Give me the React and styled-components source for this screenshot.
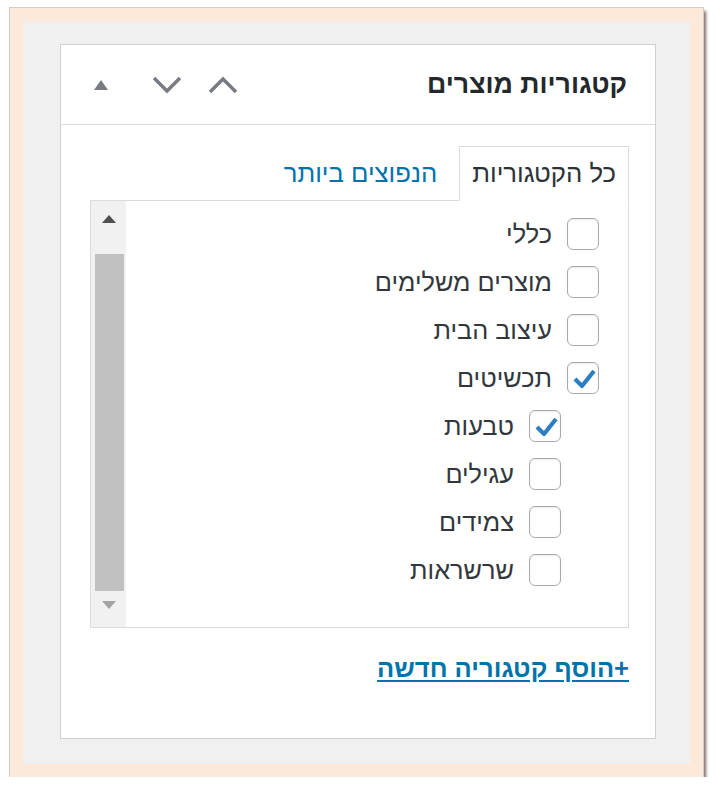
import React from "react";
import styled, { createGlobalStyle } from "styled-components";

const GlobalStyle = createGlobalStyle`
  html, body {
    margin: 0;
    padding: 0;
    background: #ffffff;
  }
  body {
    font-family: "Liberation Sans", Arial, "DejaVu Sans", sans-serif;
  }
`;

const Frame = styled.div`
  box-sizing: border-box;
  margin: 8px 0 0 10px;
  width: 693px;
  height: 769px;
  border: 13px solid #fde9da;
  background: #f0f0f0;
  box-shadow: 0 0 0 1px #d8cbc1, 3px 3px 3px rgba(80, 60, 50, 0.75);
  padding: 23px 34px 25px 37px;
  display: flex;
  flex-direction: column;
`;

const Panel = styled.div`
  flex: 1;
  direction: rtl;
  background: #ffffff;
  border: 1px solid #cdd0d4;
  display: flex;
  flex-direction: column;
`;

const Header = styled.div`
  height: 79px;
  display: flex;
  align-items: center;
  justify-content: space-between;
  border-bottom: 1px solid #dcdde0;
  padding: 0 28px 0 12px;
`;

const Title = styled.h2`
  margin: 0;
  font-size: 26.7px;
  font-weight: 700;
  color: #23282d;
`;

const Handles = styled.div`
  display: flex;
  align-items: center;
  gap: 10px;
`;

const HandlePair = styled.div`
  display: flex;
`;

const HandleButton = styled.span`
  width: 56px;
  height: 40px;
  display: flex;
  align-items: center;
  justify-content: center;
`;

const Content = styled.div`
  padding: 21px 26px 0 29px;
  display: flex;
  flex-direction: column;
`;

const Tabs = styled.div`
  display: flex;
  align-items: stretch;
  gap: 9px;
  margin-bottom: -1px;
  position: relative;
  z-index: 1;
`;

const Tab = styled.span`
  height: 55px;
  box-sizing: border-box;
  display: flex;
  align-items: center;
  padding: 0 12px;
  font-size: 25.7px;
  color: ${(p) => (p.$active ? "#2c3338" : "#0073aa")};
  background: ${(p) => (p.$active ? "#ffffff" : "transparent")};
  border: 1px solid ${(p) => (p.$active ? "#dcdcde" : "transparent")};
  border-bottom-color: ${(p) => (p.$active ? "#ffffff" : "transparent")};
`;

const ListBox = styled.div`
  height: 428px;
  box-sizing: border-box;
  border: 1px solid #dcdcde;
  display: flex;
  justify-content: space-between;
`;

const Items = styled.ul`
  list-style: none;
  margin: 0;
  padding: 9px 29px 0 0;
  display: flex;
  flex-direction: column;
`;

const Row = styled.li`
  height: 48px;
  display: flex;
  align-items: center;
  gap: 15px;
  margin-right: ${(p) => (p.$child ? "38px" : "0")};
  font-size: 25.3px;
  color: #32373c;
`;

const Box = styled.span`
  width: 32px;
  height: 32px;
  box-sizing: border-box;
  border: 1.5px solid #a7aaad;
  border-radius: 6px;
  box-shadow: inset 0 1px 2px rgba(0, 0, 0, 0.08);
  display: flex;
  align-items: center;
  justify-content: center;
  flex-shrink: 0;
`;

const Scrollbar = styled.div`
  width: 35px;
  background: #f1f1f1;
  display: flex;
  flex-direction: column;
  align-items: center;
`;

const ScrollArrow = styled.div`
  height: ${(p) => p.$h}px;
  width: 100%;
  display: flex;
  align-items: ${(p) => (p.$down ? "flex-start" : "center")};
  padding-top: ${(p) => (p.$down ? "10px" : "0")};
  box-sizing: border-box;
  justify-content: center;
`;

const Thumb = styled.div`
  width: 29px;
  margin-top: 17px;
  flex: 1;
  background: #c1c1c1;
  transform: translateX(1px);
`;

const AddLink = styled.a`
  margin-top: 26px;
  align-self: flex-start;
  font-size: 25.5px;
  line-height: 28px;
  font-weight: 700;
  color: #0073aa;
  text-decoration: underline;
  text-underline-offset: 3px;
  cursor: pointer;
`;

const Chevron = ({ up }) => (
  <svg width="30" height="18" viewBox="0 0 30 18">
    <polyline
      points={up ? "2,16 15,3 28,16" : "2,2 15,15 28,2"}
      fill="none"
      stroke="#787c82"
      strokeWidth="3.5"
    />
  </svg>
);

const Triangle = ({ color = "#787c82", w = 14, h = 10, down }) => (
  <svg width={w} height={h} viewBox={`0 0 ${w} ${h}`}>
    <polygon
      points={down ? `0,0 ${w},0 ${w / 2},${h}` : `${w / 2},0 ${w},${h} 0,${h}`}
      fill={color}
    />
  </svg>
);

const Check = () => (
  <svg width="32" height="32" viewBox="0 0 32 32" style={{ margin: "-1.5px" }}>
    <polyline
      points="8,17 15,24 27,9"
      fill="none"
      stroke="#2b7ec4"
      strokeWidth="4.2"
      strokeLinejoin="round"
    />
  </svg>
);

const categories = [
  { name: "כללי" },
  { name: "מוצרים משלימים" },
  { name: "עיצוב הבית" },
  { name: "תכשיטים", checked: true },
  { name: "טבעות", checked: true, child: true },
  { name: "עגילים", child: true },
  { name: "צמידים", child: true },
  { name: "שרשראות", child: true },
];

export default function App() {
  return (
    <>
      <GlobalStyle />
      <Frame>
        <Panel>
          <Header>
            <Title>קטגוריות מוצרים</Title>
            <Handles>
              <HandlePair>
                <HandleButton>
                  <Chevron up />
                </HandleButton>
                <HandleButton>
                  <Chevron />
                </HandleButton>
              </HandlePair>
              <HandleButton>
                <Triangle />
              </HandleButton>
            </Handles>
          </Header>
          <Content>
            <Tabs>
              <Tab $active>כל הקטגוריות</Tab>
              <Tab>הנפוצים ביותר</Tab>
            </Tabs>
            <ListBox>
              <Items>
                {categories.map((c) => (
                  <Row key={c.name} $child={c.child}>
                    <Box>{c.checked && <Check />}</Box>
                    <span>{c.name}</span>
                  </Row>
                ))}
              </Items>
              <Scrollbar>
                <ScrollArrow $h={36}>
                  <Triangle color="#505050" w={14} h={8} />
                </ScrollArrow>
                <Thumb />
                <ScrollArrow $h={36} $down>
                  <Triangle color="#a3a3a3" w={14} h={8} down />
                </ScrollArrow>
              </Scrollbar>
            </ListBox>
            <AddLink>+הוסף קטגוריה חדשה</AddLink>
          </Content>
        </Panel>
      </Frame>
    </>
  );
}
